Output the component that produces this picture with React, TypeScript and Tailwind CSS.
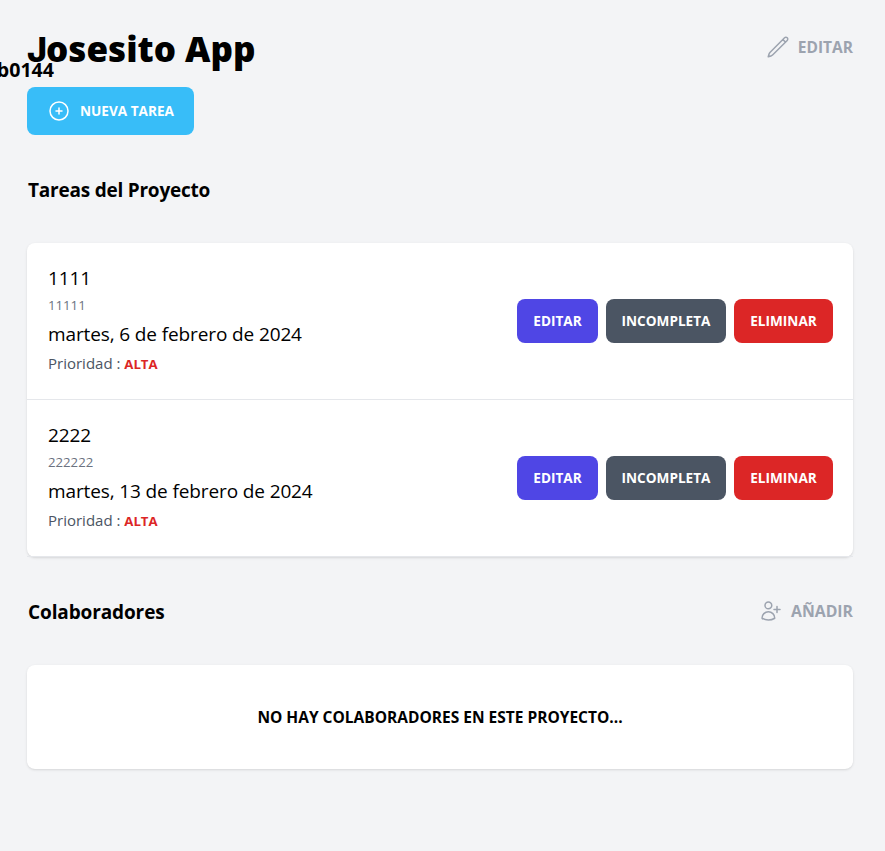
const tareas = [
  { nombre: '1111', descripcion: '11111', fecha: 'martes, 6 de febrero de 2024', prioridad: 'Alta' },
  { nombre: '2222', descripcion: '222222', fecha: 'martes, 13 de febrero de 2024', prioridad: 'Alta' },
];

function Icon({ d }: { d: string }) {
  return (
    <svg
      className="size-6 shrink-0"
      fill="none"
      viewBox="0 0 24 24"
      strokeWidth={1.5}
      stroke="currentColor"
      strokeLinecap="round"
      strokeLinejoin="round"
    >
      <path d={d} />
    </svg>
  );
}

const PENCIL =
  'M16.862 4.487l1.687-1.688a1.875 1.875 0 112.652 2.652L6.832 19.82a4.5 4.5 0 01-1.897 1.13l-2.685.8.8-2.685a4.5 4.5 0 011.13-1.897L16.863 4.487zm0 0L19.5 7.125';
const PLUS_CIRCLE = 'M12 9v6m3-3H9m12 0a9 9 0 11-18 0 9 9 0 0118 0z';
const USER_PLUS =
  'M19 7.5v3m0 0v3m0-3h3m-3 0h-3m-2.25-4.125a3.375 3.375 0 11-6.75 0 3.375 3.375 0 016.75 0zM4 19.235v-.11a6.375 6.375 0 0112.75 0v.109A12.318 12.318 0 0110.374 21c-2.331 0-4.512-.645-6.374-1.766z';

type Tarea = (typeof tareas)[number];

function FilaTarea({ tarea }: { tarea: Tarea }) {
  return (
    <div className="flex items-center justify-between border-b border-[#e5e7eb] p-5">
      <div className="flex flex-col items-start gap-1 pb-1 pl-px whitespace-nowrap">
        <p className="h-7 pt-px text-[19px] leading-7 tracking-[-0.12px]">{tarea.nombre}</p>
        <p className="h-5 text-[13.2px] leading-5 text-[#6b7280]">{tarea.descripcion}</p>
        <p className="h-7 pt-px text-[19px] leading-7 tracking-[-0.12px]">{tarea.fecha}</p>
        <p className="h-6 text-[15px] leading-6 text-[#4b5563]">
          Prioridad : <span className="text-[13.2px] font-bold text-[#dc2626] uppercase">{tarea.prioridad}</span>
        </p>
      </div>
      <div className="flex gap-2 text-[13.6px] font-bold text-white">
        <button className="h-11 w-[81px] rounded-lg bg-[#4f46e5] uppercase">Editar</button>
        <button className="h-11 w-[120px] rounded-lg bg-[#4b5563] uppercase">Incompleta</button>
        <button className="h-11 w-[99px] rounded-lg bg-[#dc2626] uppercase">Eliminar</button>
      </div>
    </div>
  );
}

export default function App() {
  return (
    <div className="relative h-[851px] overflow-hidden bg-[#f3f4f6] pt-[27px] pr-8 pl-[27px] font-['Open_Sans','Noto_Sans',sans-serif] text-black">
      <span className="absolute top-[56px] right-[831px] text-[19.6px] leading-7 font-bold whitespace-nowrap">b0144</span>
      <header className="flex items-center justify-between">
        <h1 className="h-10 pt-0.5 text-[35px] leading-10 font-black whitespace-nowrap">
          <span className="font-['Inter'] text-[34px] leading-none font-extrabold tracking-[-1px]">J</span>osesito App
        </h1>
        <div className="flex h-10 items-center gap-2 text-[#9ca3af]">
          <Icon d={PENCIL} />
          <span className="text-[15.5px] leading-6 font-bold uppercase">Editar</span>
        </div>
      </header>
      <button className="mt-5 flex h-12 w-[167px] items-center gap-[9px] rounded-lg bg-[#38bdf8] pl-5 text-[13.6px] font-bold whitespace-nowrap text-white uppercase">
        <Icon d={PLUS_CIRCLE} />
        Nueva Tarea
      </button>
      <h2 className="mt-10 h-7 pt-px pl-px text-[19px] leading-7 font-bold tracking-[-0.22px]">Tareas del Proyecto</h2>
      <section className="mt-10 rounded-lg bg-white shadow">
        {tareas.map((tarea) => (
          <FilaTarea key={tarea.nombre} tarea={tarea} />
        ))}
      </section>
      <div className="mt-10 flex h-7 items-center justify-between">
        <h2 className="h-7 pt-px pl-px text-[19px] leading-7 font-bold tracking-[-0.12px]">Colaboradores</h2>
        <div className="flex items-center gap-[9px] text-[#9ca3af]">
          <Icon d={USER_PLUS} />
          <span className="text-[15.8px] leading-6 font-bold uppercase">Añadir</span>
        </div>
      </div>
      <section className="mt-10 rounded-lg bg-white py-10 text-center shadow">
        <p className="text-[15.5px] leading-6 font-bold uppercase">No hay colaboradores en este proyecto...</p>
      </section>
    </div>
  );
}
